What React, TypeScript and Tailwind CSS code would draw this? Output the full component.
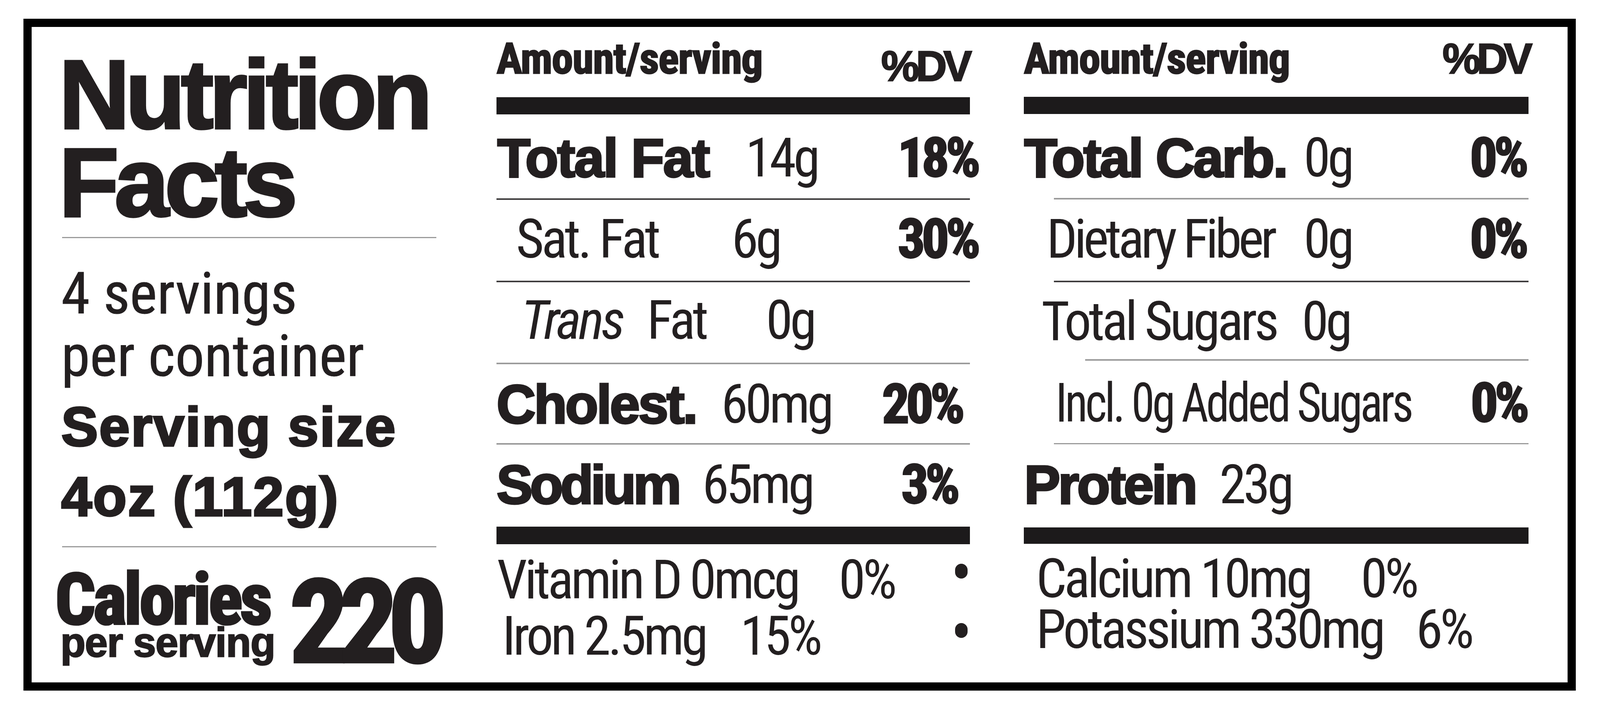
const bold = "font-['Liberation_Sans',Arial,sans-serif] font-bold"
const cond = "font-['Roboto_Condensed','Liberation_Sans',sans-serif]"
const cell = "text-[145px] leading-[160px] whitespace-nowrap"
const heavy = "[-webkit-text-stroke:5px_#231f20]"
const pct = `${cond} ${cell} font-bold tracking-[-0.06em] [-webkit-text-stroke:4px_#231f20]`
const head = "text-[115px] leading-[171px] [-webkit-text-stroke:3px_#231f20]"

function Rule({ className = "" }: { className?: string }) {
  return <div className={"h-[4px] " + className} />
}

function Bullet({ className = "" }: { className?: string }) {
  return <span className={"ml-auto mr-[6px] h-[40px] w-[33px] rounded-full bg-[#231f20] " + className} />
}

function MiddleColumn() {
  return (
    <div className="flex w-[1268px] shrink-0 flex-col">
      <div className="flex h-[189px] items-start justify-between">
        <span className={`${cond} ${head} font-bold tracking-[-0.015em]`}>Amount/serving</span>
        <span className={`${bold} ${head} mt-[20px] mr-[3px] tracking-[-0.08em]`}>%DV</span>
      </div>
      <div className="h-[46px] bg-[#1c1a1b]" />

      <div className="flex h-[225px] items-start pt-[37px]">
        <span className={`${bold} ${cell} ${heavy} w-[667px] pl-[2px] tracking-[-0.02em]`}>Total Fat</span>
        <span className={`${cond} ${cell} tracking-[-0.05em]`}>14g</span>
        <span className={`${pct} ml-auto mr-[-20px]`}>18%</span>
      </div>
      <Rule className="bg-[#3f3d3e]" />

      <div className="flex h-[217px] items-start pt-[26px]">
        <span className={`${cond} ${cell} w-[630px] pl-[52px] tracking-[-0.05em]`}>Sat. Fat</span>
        <span className={`${cond} ${cell} tracking-[-0.05em]`}>6g</span>
        <span className={`${pct} ml-auto mr-[-20px]`}>30%</span>
      </div>
      <Rule className="bg-[#3f3d3e]" />

      <div className="flex h-[216px] items-start pt-[23px]">
        <span className={`${cond} ${cell} w-[403px] pl-[66px] italic tracking-[-0.05em]`}>Trans</span>
        <span className={`${cond} ${cell} w-[319px] tracking-[-0.05em]`}>Fat</span>
        <span className={`${cond} ${cell} tracking-[-0.05em]`}>0g</span>
      </div>
      <Rule className="bg-[#9b9b9b]" />

      <div className="flex h-[211px] items-start pt-[28px]">
        <span className={`${bold} ${cell} ${heavy} w-[602px] tracking-[-0.032em]`}>Cholest.</span>
        <span className={`${cond} ${cell} tracking-[-0.05em]`}>60mg</span>
        <span className={`${pct} ml-auto mr-[22px]`}>20%</span>
      </div>
      <Rule className="bg-[#9b9b9b]" />

      <div className="flex h-[220px] items-start pt-[29px]">
        <span className={`${bold} ${cell} ${heavy} w-[551px] tracking-[-0.05em]`}>Sodium</span>
        <span className={`${cond} ${cell} tracking-[-0.05em]`}>65mg</span>
        <span className={`${pct} ml-auto mr-[35px]`}>3%</span>
      </div>
      <div className="h-[48px] bg-[#1c1a1b]" />

      <div className="flex flex-col pt-[22px]">
        <div className="flex items-start">
          <span className={`${cond} w-[917px] pl-[1px] text-[145px] leading-[150px] whitespace-nowrap tracking-[-0.05em]`}>
            Vitamin D 0mcg
          </span>
          <span className={`${cond} text-[145px] leading-[150px] whitespace-nowrap tracking-[-0.05em]`}>0%</span>
          <Bullet className="mt-[30px]" />
        </div>
        <div className="flex items-start">
          <span className={`${cond} w-[653px] pl-[15px] text-[145px] leading-[150px] whitespace-nowrap tracking-[-0.05em]`}>
            Iron 2.5mg
          </span>
          <span className={`${cond} text-[145px] leading-[150px] whitespace-nowrap tracking-[-0.05em]`}>15%</span>
          <Bullet className="mt-[39px]" />
        </div>
      </div>
    </div>
  )
}

function RightColumn() {
  return (
    <div className="flex w-[1353px] shrink-0 flex-col">
      <div className="flex h-[188px] items-start justify-between">
        <span className={`${cond} ${head} font-bold tracking-[-0.015em]`}>Amount/serving</span>
        <span className={`${bold} ${head} tracking-[-0.09em]`}>%DV</span>
      </div>
      <div className="h-[46px] bg-[#1c1a1b]" />

      <div className="flex h-[225px] items-start pt-[38px]">
        <span className={`${bold} ${cell} ${heavy} w-[750px] pl-[1px] tracking-[-0.027em]`}>Total Carb.</span>
        <span className={`${cond} ${cell} tracking-[-0.05em]`}>0g</span>
        <span className={`${pct} ml-auto mr-[9px]`}>0%</span>
      </div>
      <Rule className="ml-[81px] bg-[#9b9b9b]" />

      <div className="flex h-[218px] items-start pt-[27px]">
        <span className={`${cond} ${cell} w-[750px] pl-[61px] tracking-[-0.06em]`}>Dietary Fiber</span>
        <span className={`${cond} ${cell} tracking-[-0.05em]`}>0g</span>
        <span className={`${pct} ml-auto mr-[9px]`}>0%</span>
      </div>
      <Rule className="ml-[81px] bg-[#3f3d3e]" />

      <div className="flex h-[206px] items-start pt-[26px]">
        <span className={`${cond} ${cell} w-[745px] pl-[47px] tracking-[-0.05em]`}>Total Sugars</span>
        <span className={`${cond} ${cell} tracking-[-0.05em]`}>0g</span>
      </div>
      <Rule className="ml-[164px] bg-[#9b9b9b]" />

      <div className="flex h-[221px] items-start pt-[35px]">
        <span className={`${cond} ${cell} inline-block origin-left scale-x-[0.867] pl-[98px] tracking-[-0.05em]`}>
          Incl. 0g Added Sugars
        </span>
        <span className={`${pct} ml-auto mr-[9px]`}>0%</span>
      </div>
      <Rule className="ml-[81px] bg-[#9b9b9b]" />

      <div className="flex h-[222px] items-start pt-[29px]">
        <span className={`${bold} ${cell} ${heavy} w-[524px] pl-[1px] tracking-[-0.04em]`}>Protein</span>
        <span className={`${cond} ${cell} tracking-[-0.05em]`}>23g</span>
      </div>
      <div className="h-[44px] bg-[#1c1a1b]" />

      <div className="flex flex-col pt-[28px]">
        <div className="flex items-start">
          <span className={`${cond} w-[903px] pl-[33px] text-[145px] leading-[136px] whitespace-nowrap tracking-[-0.05em]`}>
            Calcium 10mg
          </span>
          <span className={`${cond} text-[145px] leading-[136px] whitespace-nowrap tracking-[-0.05em]`}>0%</span>
        </div>
        <div className="flex items-start">
          <span className={`${cond} w-[1051px] pl-[33px] text-[145px] leading-[136px] whitespace-nowrap tracking-[-0.05em]`}>
            Potassium 330mg
          </span>
          <span className={`${cond} text-[145px] leading-[136px] whitespace-nowrap tracking-[-0.05em]`}>6%</span>
        </div>
      </div>
    </div>
  )
}

function LeftColumn() {
  return (
    <div className="flex w-[1000px] shrink-0 flex-col pt-[64px]">
      <div className={`${bold} ml-[-12px] text-[263px] leading-[236px] tracking-[-0.045em] [-webkit-text-stroke:6px_#231f20]`}>
        <div>Nutrition</div>
        <div>Facts</div>
      </div>
      <div className="mt-[28px] ml-[-4px] h-[3px] w-[1003px] bg-[#9b9b9b]" />

      <div className={`${cond} mt-[66px] ml-[-6px] text-[156px] leading-[167px] whitespace-nowrap [-webkit-text-stroke:1px_#231f20]`}>
        <div>4 servings</div>
        <div>per container</div>
      </div>
      <div className={`${bold} mt-[12px] ml-[-6px] text-[148px] leading-[188px] tracking-[0.02em] whitespace-nowrap [-webkit-text-stroke:5px_#231f20]`}>
        <div>Serving size</div>
        <div>4oz (112g)</div>
      </div>
      <div className="mt-[38px] ml-[-4px] h-[3px] w-[1003px] bg-[#9b9b9b]" />

      <div className="mt-[66px] flex items-start">
        <div className="flex w-[606px] shrink-0 flex-col">
          <span className={`${cond} ml-[-22px] text-[190px] leading-[150px] font-bold tracking-[-0.035em] whitespace-nowrap [-webkit-text-stroke:6px_#231f20]`}>
            Calories
          </span>
          <span className={`${bold} ml-[-8px] text-[110px] leading-[80px] tracking-[-0.015em] whitespace-nowrap [-webkit-text-stroke:3px_#231f20]`}>
            per serving
          </span>
        </div>
        <span className={`${cond} mt-[6px] text-[311px] leading-[260px] font-bold tracking-[-0.08em] [-webkit-text-stroke:7px_#231f20]`}>
          220
        </span>
      </div>
    </div>
  )
}

export default function App() {
  return (
    <div className="bg-white text-[#231f20] [zoom:0.9552]">
      <div className="h-[1852px] pt-[50px] pl-[63px]">
        <div className="flex h-[1802px] w-[4160px] border-[22px] border-black pl-[85px]">
          <LeftColumn />
          <div className="w-[161px] shrink-0" />
          <MiddleColumn />
          <div className="w-[145px] shrink-0" />
          <RightColumn />
        </div>
      </div>
    </div>
  )
}
